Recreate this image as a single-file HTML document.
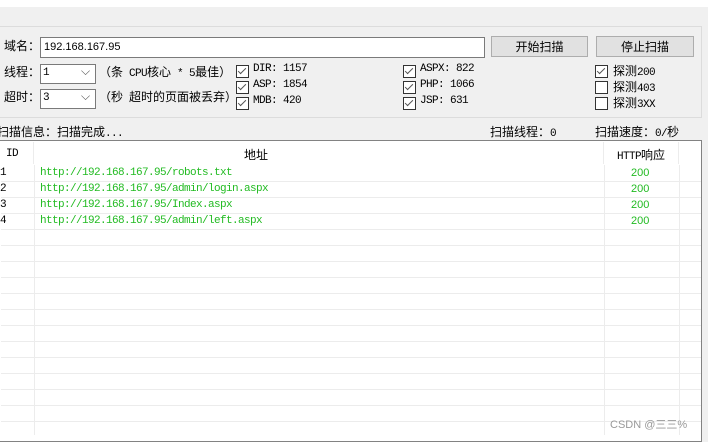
<!DOCTYPE html><html><head><meta charset="utf-8"><style>
body{margin:0;width:708px;height:435px;background:#f0f0f0;position:relative;overflow:hidden;font-family:"Liberation Mono","Noto Sans CJK SC",monospace;font-size:11px;letter-spacing:-0.6px;color:#000}
.a{position:absolute;white-space:nowrap}
.cj{font-family:"Liberation Mono","Noto Sans CJK SC",monospace;font-size:12px;letter-spacing:0}
.cj i{font-style:normal;font-size:11px;letter-spacing:-0.6px}
.cb{position:absolute;width:11px;height:11px;border:1px solid #333;background:#fff}
.cb.c::after{content:"";position:absolute;left:3px;top:0px;width:3px;height:7px;border:solid #555;border-width:0 1.3px 1.3px 0;transform:rotate(45deg)}
.btn{position:absolute;height:19px;border:1px solid #adadad;background:#e1e1e1;text-align:center;line-height:19px;font-family:"Noto Sans CJK SC",sans-serif;letter-spacing:0}
.in{position:absolute;background:#fff;border:1px solid #7a7a7a;height:19px}
.hl{position:absolute;left:1px;width:700px;height:1px;background:#ececec}
.vl{position:absolute;width:1px;background:#ececec}
.g{color:#22bb22}
.s{font-family:'Liberation Sans',sans-serif;font-size:11px;letter-spacing:0}
</style></head><body>
<div class="a" style="left:0;top:0;width:708px;height:7px;background:#fff"></div>
<div class="a" style="left:-1px;top:26px;width:701px;height:90px;border:1px solid #dcdcdc"></div>
<div class="a cj" style="left:4px;top:37px">域名：</div>
<div class="in" style="left:40px;top:37px;width:443px"><span class="a s" style="left:3px;top:3px">192.168.167.95</span></div>
<div class="btn" style="left:491px;top:36px;width:95px;font-size:12px">开始扫描</div>
<div class="btn" style="left:596px;top:36px;width:96px;font-size:12px">停止扫描</div>
<div class="a cj" style="left:4px;top:63px">线程：</div>
<div class="in" style="left:40px;top:64px;width:54px;height:18px"><span class="a" style="left:2px;top:2px">1</span><span class="a" style="left:40px;top:0px;color:#555;font-size:12px">⌵</span></div>
<div class="a cj" style="left:99px;top:63px">（条<i> CPU</i>核心<i> * 5</i>最佳）</div>
<div class="a cj" style="left:4px;top:88px">超时：</div>
<div class="in" style="left:40px;top:89px;width:54px;height:18px"><span class="a" style="left:2px;top:2px">3</span><span class="a" style="left:40px;top:0px;color:#555;font-size:12px">⌵</span></div>
<div class="a cj" style="left:99px;top:88px">（秒<i> </i>超时的页面被丢弃）</div>
<div class="cb c" style="left:236px;top:65px"></div><div class="a" style="left:253px;top:63px">DIR: 1157</div>
<div class="cb c" style="left:236px;top:81px"></div><div class="a" style="left:253px;top:79px">ASP: 1854</div>
<div class="cb c" style="left:236px;top:97px"></div><div class="a" style="left:253px;top:95px">MDB: 420</div>
<div class="cb c" style="left:403px;top:65px"></div><div class="a" style="left:420px;top:63px">ASPX: 822</div>
<div class="cb c" style="left:403px;top:81px"></div><div class="a" style="left:420px;top:79px">PHP: 1066</div>
<div class="cb c" style="left:403px;top:97px"></div><div class="a" style="left:420px;top:95px">JSP: 631</div>
<div class="cb c" style="left:595px;top:65px"></div><div class="a cj" style="left:613px;top:62px">探测<i>200</i></div>
<div class="cb" style="left:595px;top:81px"></div><div class="a cj" style="left:613px;top:78px">探测<i>403</i></div>
<div class="cb" style="left:595px;top:97px"></div><div class="a cj" style="left:613px;top:94px">探测<i>3XX</i></div>
<div class="a cj" style="left:-3px;top:123px">扫描信息：扫描完成<i>...</i></div>
<div class="a cj" style="left:490px;top:123px">扫描线程：<i>0</i></div>
<div class="a cj" style="left:595px;top:123px">扫描速度：<i>0/</i>秒</div>
<div class="a" style="left:-1px;top:140px;width:701px;height:300px;border:1px solid #828282;background:#fff"></div>
<div class="vl" style="left:33px;top:142px;height:22px"></div>
<div class="vl" style="left:603px;top:142px;height:22px"></div>
<div class="vl" style="left:678px;top:142px;height:22px"></div>
<div class="vl" style="left:34px;top:165px;height:270px"></div>
<div class="vl" style="left:604px;top:165px;height:270px"></div>
<div class="vl" style="left:679px;top:165px;height:270px"></div>
<div class="a" style="left:6px;top:148px">ID</div>
<div class="a cj" style="left:244px;top:146px">地址</div>
<div class="a cj" style="left:617px;top:146px"><i>HTTP</i>响应</div>
<div class="hl" style="top:181px"></div><div class="hl" style="top:197px"></div><div class="hl" style="top:213px"></div><div class="hl" style="top:229px"></div><div class="hl" style="top:245px"></div><div class="hl" style="top:261px"></div><div class="hl" style="top:277px"></div><div class="hl" style="top:293px"></div><div class="hl" style="top:309px"></div><div class="hl" style="top:325px"></div><div class="hl" style="top:341px"></div><div class="hl" style="top:357px"></div><div class="hl" style="top:373px"></div><div class="hl" style="top:389px"></div><div class="hl" style="top:405px"></div><div class="hl" style="top:421px"></div>
<div class="a" style="left:0;top:167px">1</div><div class="a g" style="left:40px;top:167px">http://192.168.167.95/robots.txt</div><div class="a g s" style="left:631px;top:167px">200</div>
<div class="a" style="left:0;top:183px">2</div><div class="a g" style="left:40px;top:183px">http://192.168.167.95/admin/login.aspx</div><div class="a g s" style="left:631px;top:183px">200</div>
<div class="a" style="left:0;top:199px">3</div><div class="a g" style="left:40px;top:199px">http://192.168.167.95/Index.aspx</div><div class="a g s" style="left:631px;top:199px">200</div>
<div class="a" style="left:0;top:215px">4</div><div class="a g" style="left:40px;top:215px">http://192.168.167.95/admin/left.aspx</div><div class="a g s" style="left:631px;top:215px">200</div>
<div class="a" style="left:610px;top:416px;color:#999;font-family:'Liberation Sans','Noto Sans CJK SC',sans-serif;font-size:11px;letter-spacing:0">CSDN @三三%</div>
</body></html>
